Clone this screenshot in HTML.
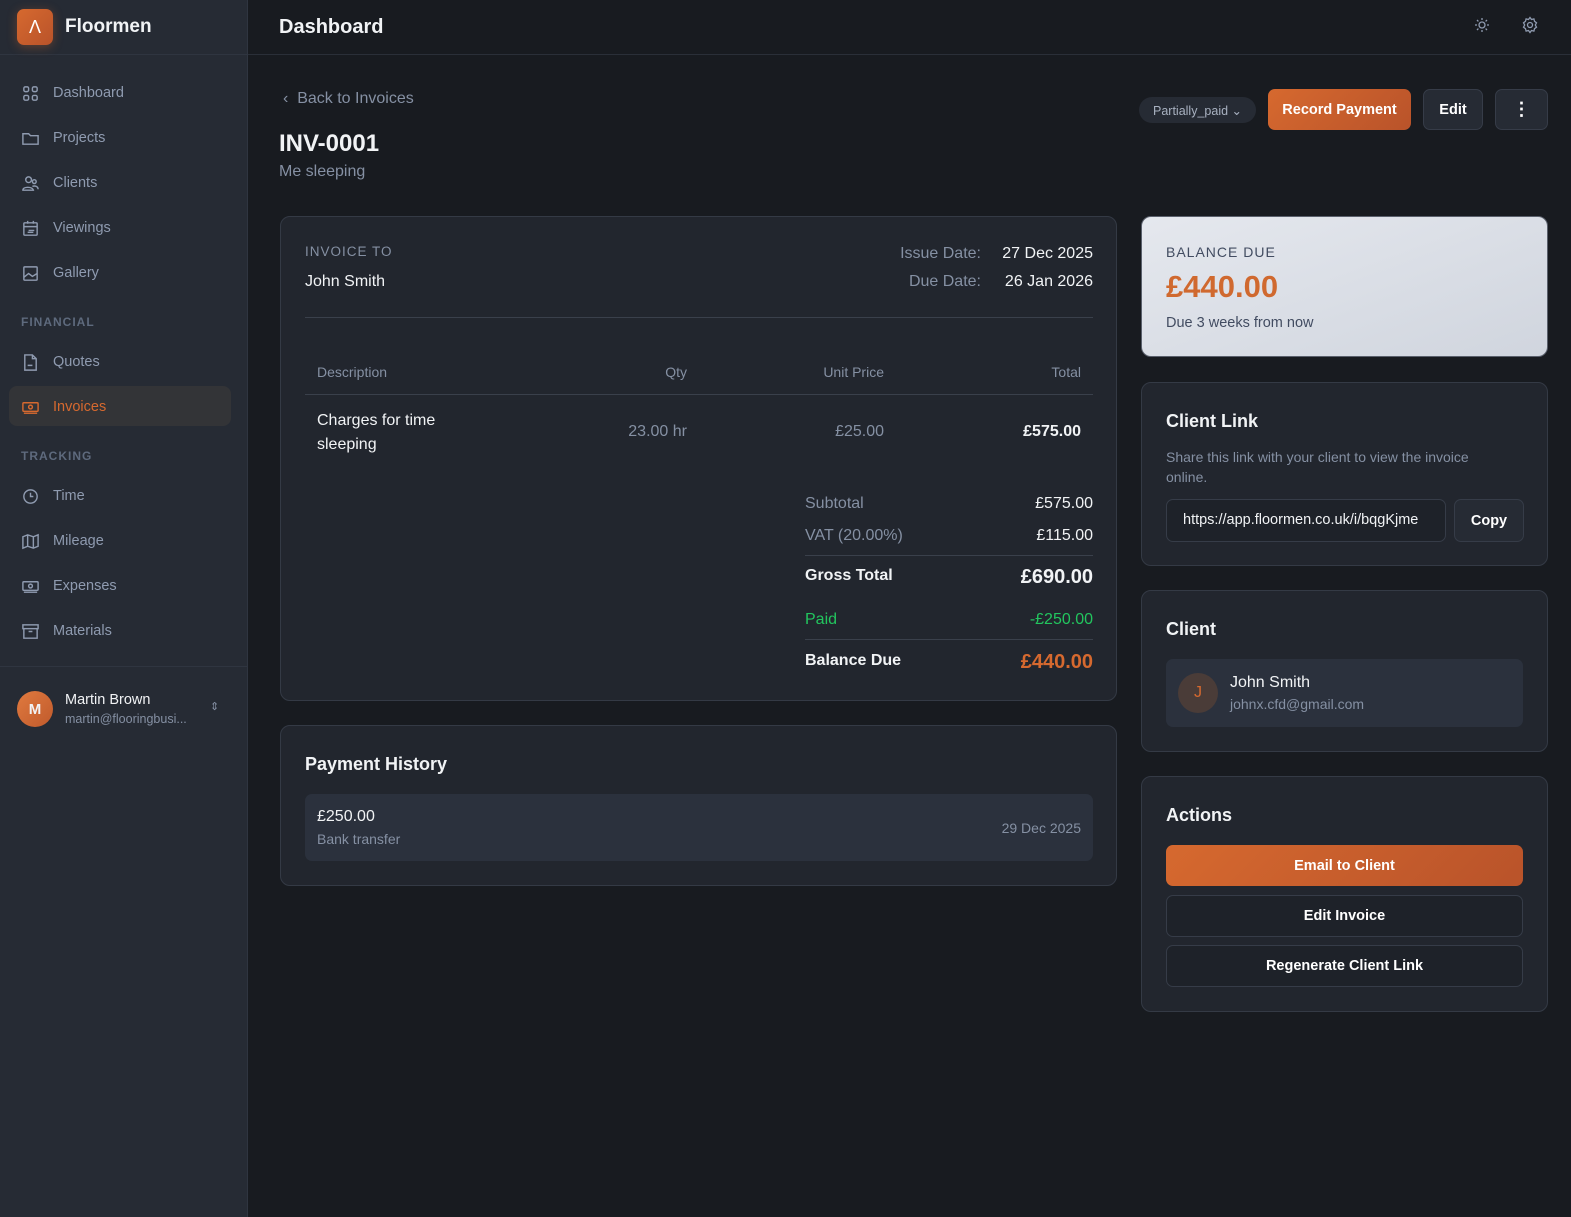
<!DOCTYPE html>
<html><head><meta charset="utf-8"><style>
*{box-sizing:border-box;margin:0;padding:0}
body{width:1571px;height:1217px;background:#181b20;font-family:"Liberation Sans",sans-serif;color:#f1f3f5;position:relative;overflow:hidden}
.sb{position:absolute;left:0;top:0;width:248px;height:1217px;background:#262b34;border-right:1px solid #2f3540}
.logo{height:55px;border-bottom:1px solid #2f3540;display:flex;align-items:center;padding-left:17px}
.lg{width:36px;height:36px;border-radius:7px;background:linear-gradient(135deg,#d6692f,#b9532a);color:#fff;display:flex;align-items:center;justify-content:center;font-size:18px;box-shadow:0 2px 10px rgba(214,105,47,.35)}
.logo span{margin-left:12px;font-size:19px;font-weight:bold}
.nav{position:absolute;left:9px;width:222px;height:40px;display:flex;align-items:center;padding-left:12px;padding-top:2px;font-size:14.5px;color:#8f9bb0;border-radius:8px}
.nav svg{width:19px;height:19px;margin-right:13px;stroke:#8f9bb0;fill:none;stroke-width:1.5}
.nav.act{background:#333437;color:#d6692f}.nav.act svg{stroke:#d6692f}
.sec{position:absolute;left:21px;font-size:12px;letter-spacing:1px;color:#5e6a7d;font-weight:bold}
.top{position:absolute;left:248px;top:0;right:0;height:55px;border-bottom:1px solid #2a2f38;display:flex;align-items:center;padding-left:31px;font-size:20px;font-weight:bold}
.card{position:absolute;background:#22262e;border:1px solid #343a45;border-radius:10px}
.muted{color:#8590a3}
.abs{position:absolute}
.btn{position:absolute;border-radius:7px;display:flex;align-items:center;justify-content:center;font-size:14.5px;font-weight:bold}
.or{background:linear-gradient(135deg,#d6692f,#b9532a);color:#fff}
.dk{background:#262b34;border:1px solid #363c48;color:#fff}
.r{text-align:right}
</style></head><body>
<div class="sb">
<div class="logo"><div class="lg">&#923;</div><span>Floormen</span></div>
<div class="nav" style="top:72px"><svg viewBox="0 0 20 20"><rect x="3" y="3" width="5" height="5" rx="1.5"/><rect x="12" y="3" width="5" height="5" rx="1.5"/><rect x="3" y="12" width="5" height="5" rx="1.5"/><rect x="12" y="12" width="5" height="5" rx="1.5"/></svg>Dashboard</div>
<div class="nav" style="top:117px"><svg viewBox="0 0 20 20"><path d="M2 5h6l2 2h8v9H2z"/></svg>Projects</div>
<div class="nav" style="top:162px"><svg viewBox="0 0 20 20"><circle cx="8" cy="6" r="3"/><circle cx="14" cy="8" r="2"/><path d="M2 17c0-4 10-4 11 0zM12 13c3-1 6 0 6 3"/></svg>Clients</div>
<div class="nav" style="top:207px"><svg viewBox="0 0 20 20"><rect x="3" y="4" width="14" height="13" rx="1"/><path d="M3 8h14M7 2v3M13 2v3M8 12h6M7 14h6"/></svg>Viewings</div>
<div class="nav" style="top:252px"><svg viewBox="0 0 20 20"><rect x="3" y="3" width="14" height="14" rx="1"/><path d="M3 14l5-4 4 3 5-3"/></svg>Gallery</div>
<div class="sec" style="top:315px">FINANCIAL</div>
<div class="nav" style="top:341px"><svg viewBox="0 0 20 20"><path d="M4 2h8l4 4v12H4zM12 2v4h4M7 13h5"/></svg>Quotes</div>
<div class="nav act" style="top:386px"><svg viewBox="0 0 20 20"><rect x="2" y="5" width="16" height="9" rx="1"/><circle cx="10" cy="9.5" r="2"/><path d="M3 16h14"/></svg>Invoices</div>
<div class="sec" style="top:449px">TRACKING</div>
<div class="nav" style="top:475px"><svg viewBox="0 0 20 20"><circle cx="10" cy="10" r="7"/><path d="M10 6v4h3"/></svg>Time</div>
<div class="nav" style="top:520px"><svg viewBox="0 0 20 20"><path d="M2 5l5-2 6 2 5-2v12l-5 2-6-2-5 2zM7 3v12M13 5v12"/></svg>Mileage</div>
<div class="nav" style="top:565px"><svg viewBox="0 0 20 20"><rect x="2" y="5" width="16" height="9" rx="1"/><circle cx="10" cy="9.5" r="2"/><path d="M3 16h14"/></svg>Expenses</div>
<div class="nav" style="top:610px"><svg viewBox="0 0 20 20"><rect x="2" y="3" width="16" height="4"/><path d="M3 7v10h14V7M8 10h4"/></svg>Materials</div>
<div class="abs" style="left:0;top:666px;width:247px;border-top:1px solid #2f3540"></div>
<div class="abs" style="left:17px;top:691px;width:36px;height:36px;border-radius:50%;background:linear-gradient(135deg,#e07a3f,#c05a2c);display:flex;align-items:center;justify-content:center;font-weight:bold;font-size:15px">M</div>
<div class="abs" style="left:65px;top:692px;font-size:14.5px">Martin Brown</div>
<div class="abs muted" style="left:65px;top:712px;font-size:12.5px">martin@flooringbusi...</div>
<div class="abs muted" style="left:210px;top:700px;font-size:11px">&#8661;</div>
</div>
<div class="top">Dashboard
<svg style="position:absolute;left:1226px;top:17px" width="16" height="16" viewBox="0 0 16 16" fill="none" stroke="#8f9bb0" stroke-width="1.3"><circle cx="8" cy="8" r="3"/><path d="M8 1v2M8 13v2M1 8h2M13 8h2M3 3l1.4 1.4M11.6 11.6L13 13M3 13l1.4-1.4M11.6 4.4L13 3"/></svg>
<svg style="position:absolute;left:1273px;top:16px" width="18" height="18" viewBox="0 0 18 18" fill="none" stroke="#8f9bb0" stroke-width="1.3"><circle cx="9" cy="9" r="2.5"/><path d="M9 1.5l1.5 2 2.4-.6.6 2.4 2 1.5-1.2 2.2 1.2 2.2-2 1.5-.6 2.4-2.4-.6L9 16.5l-1.5-2-2.4.6-.6-2.4-2-1.5L3.7 9 2.5 6.8l2-1.5.6-2.4 2.4.6z"/></svg>
</div>
<div class="abs muted" style="left:283px;top:90px;font-size:16px">&#8249;&nbsp; Back to Invoices</div>
<div class="abs" style="left:279px;top:130px;font-size:24px;font-weight:bold">INV-0001</div>
<div class="abs muted" style="left:279px;top:163px;font-size:16px">Me sleeping</div>
<div class="btn" style="left:1139px;top:97px;width:117px;height:26px;border-radius:13px;background:#262b34;color:#a8b1c0;font-size:12.5px;font-weight:normal">Partially_paid &#8964;</div>
<div class="btn or" style="left:1268px;top:89px;width:143px;height:41px">Record Payment</div>
<div class="btn dk" style="left:1423px;top:89px;width:60px;height:41px">Edit</div>
<div class="btn dk" style="left:1495px;top:89px;width:53px;height:41px;font-size:18px">&#8942;</div>

<div class="card" style="left:280px;top:216px;width:837px;height:485px">
<div class="abs muted" style="left:24px;top:27px;font-size:13.5px;letter-spacing:1px">INVOICE TO</div>
<div class="abs" style="left:24px;top:56px;font-size:16px">John Smith</div>
<div class="abs muted r" style="left:560px;width:140px;top:28px;font-size:16px">Issue Date:</div>
<div class="abs r" style="left:700px;width:112px;top:28px;font-size:16px">27 Dec 2025</div>
<div class="abs muted r" style="left:560px;width:140px;top:56px;font-size:16px">Due Date:</div>
<div class="abs r" style="left:700px;width:112px;top:56px;font-size:16px">26 Jan 2026</div>
<div class="abs" style="left:24px;top:100px;width:788px;border-top:1px solid #3a404b"></div>
<div class="abs muted" style="left:36px;top:147px;font-size:14px">Description</div>
<div class="abs muted r" style="left:300px;width:106px;top:147px;font-size:14px">Qty</div>
<div class="abs muted r" style="left:450px;width:153px;top:147px;font-size:14px">Unit Price</div>
<div class="abs muted r" style="left:650px;width:150px;top:147px;font-size:14px">Total</div>
<div class="abs" style="left:24px;top:177px;width:788px;border-top:1px solid #3a404b"></div>
<div class="abs" style="left:36px;top:192px;font-size:16px;line-height:24px">Charges for time<br>sleeping</div>
<div class="abs muted r" style="left:300px;width:106px;top:206px;font-size:16px">23.00 hr</div>
<div class="abs muted r" style="left:450px;width:153px;top:206px;font-size:16px">£25.00</div>
<div class="abs r" style="left:650px;width:150px;top:206px;font-size:16px;font-weight:bold">£575.00</div>
<div class="abs muted" style="left:524px;top:278px;font-size:16px">Subtotal</div><div class="abs r" style="left:650px;width:162px;top:278px;font-size:16px">£575.00</div>
<div class="abs muted" style="left:524px;top:310px;font-size:16px">VAT (20.00%)</div><div class="abs r" style="left:650px;width:162px;top:310px;font-size:16px">£115.00</div>
<div class="abs" style="left:524px;top:338px;width:288px;border-top:1px solid #3a404b"></div>
<div class="abs" style="left:524px;top:350px;font-size:16px;font-weight:bold">Gross Total</div><div class="abs r" style="left:650px;width:162px;top:349px;font-size:20px;font-weight:bold">£690.00</div>
<div class="abs" style="left:524px;top:394px;font-size:16px;color:#22c55e">Paid</div><div class="abs r" style="left:650px;width:162px;top:394px;font-size:16px;color:#22c55e">-£250.00</div>
<div class="abs" style="left:524px;top:422px;width:288px;border-top:1px solid #3a404b"></div>
<div class="abs" style="left:524px;top:435px;font-size:16px;font-weight:bold">Balance Due</div><div class="abs r" style="left:650px;width:162px;top:434px;font-size:20px;font-weight:bold;color:#d6692f">£440.00</div>
</div>

<div class="card" style="left:280px;top:725px;width:837px;height:161px">
<div class="abs" style="left:24px;top:28px;font-size:18px;font-weight:bold">Payment History</div>
<div class="abs" style="left:24px;top:68px;width:788px;height:67px;background:#2b313d;border-radius:7px">
<div class="abs" style="left:12px;top:14px;font-size:16px">£250.00</div>
<div class="abs muted" style="left:12px;top:37px;font-size:14px">Bank transfer</div>
<div class="abs muted" style="right:12px;top:26px;font-size:14px">29 Dec 2025</div></div>
</div>

<div class="card" style="left:1141px;top:216px;width:407px;height:141px;background:linear-gradient(160deg,#e5e8ee,#d0d5de);border-color:#5a606c">
<div class="abs" style="left:24px;top:27px;font-size:14px;letter-spacing:1px;color:#424c61">BALANCE DUE</div>
<div class="abs" style="left:24px;top:52px;font-size:31px;font-weight:bold;color:#d0692f">£440.00</div>
<div class="abs" style="left:24px;top:98px;font-size:14.5px;color:#424c61">Due 3 weeks from now</div>
</div>

<div class="card" style="left:1141px;top:382px;width:407px;height:184px">
<div class="abs" style="left:24px;top:28px;font-size:18px;font-weight:bold">Client Link</div>
<div class="abs muted" style="left:24px;top:64px;width:335px;font-size:14px;line-height:20px">Share this link with your client to view the invoice online.</div>
<div class="abs" style="left:24px;top:116px;width:280px;height:43px;border:1px solid #363c48;border-radius:7px;background:#1e2229;overflow:hidden;white-space:nowrap;padding:12px 16px;font-size:14.5px">https://app.floormen.co.uk/i/bqgKjme</div>
<div class="btn dk" style="left:312px;top:116px;width:70px;height:43px">Copy</div>
</div>

<div class="card" style="left:1141px;top:590px;width:407px;height:162px">
<div class="abs" style="left:24px;top:28px;font-size:18px;font-weight:bold">Client</div>
<div class="abs" style="left:24px;top:68px;width:357px;height:68px;background:#2b313d;border-radius:7px">
<div class="abs" style="left:12px;top:14px;width:40px;height:40px;border-radius:50%;background:#4a3c38;color:#d6692f;display:flex;align-items:center;justify-content:center;font-size:16px">J</div>
<div class="abs" style="left:64px;top:15px;font-size:16px">John Smith</div>
<div class="abs muted" style="left:64px;top:37px;font-size:14px">johnx.cfd@gmail.com</div></div>
</div>

<div class="card" style="left:1141px;top:776px;width:407px;height:236px">
<div class="abs" style="left:24px;top:28px;font-size:18px;font-weight:bold">Actions</div>
<div class="btn or" style="left:24px;top:68px;width:357px;height:41px">Email to Client</div>
<div class="btn dk" style="left:24px;top:118px;width:357px;height:42px;background:#1e2229">Edit Invoice</div>
<div class="btn dk" style="left:24px;top:168px;width:357px;height:42px;background:#1e2229">Regenerate Client Link</div>
</div>
</body></html>
